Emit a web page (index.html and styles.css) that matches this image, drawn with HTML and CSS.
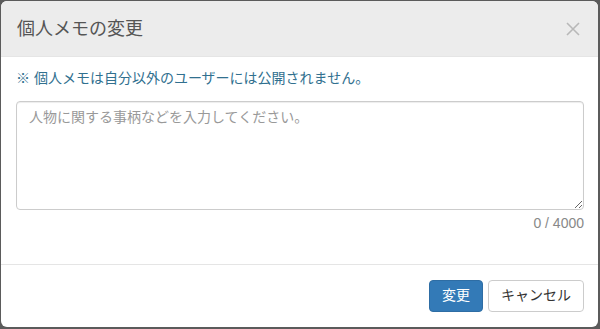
FILE: index.html
```html
<!DOCTYPE html>
<html lang="ja">
<head>
  <meta charset="UTF-8" />
  <title>個人メモの変更</title>
  <link rel="stylesheet" href="styles.css">
</head>
<body>
  <div class="modal">
    <div class="modal-header">
      <h4 class="modal-title">個人メモの変更</h4>
      <button class="close" type="button" aria-label="閉じる">
        <svg width="14" height="14" viewBox="0 0 14 14"><path d="M1 1L13 13M13 1L1 13" stroke="#b8b8b8" stroke-width="1.6" fill="none"/></svg>
      </button>
    </div>
    <div class="modal-body">
      <p class="note">※ 個人メモは自分以外のユーザーには公開されません。</p>
      <textarea class="memo" placeholder="人物に関する事柄などを入力してください。"></textarea>
      <div class="counter">0 / 4000</div>
    </div>
    <div class="modal-footer">
      <button class="btn btn-primary" type="button">変更</button>
      <button class="btn btn-default" type="button">キャンセル</button>
    </div>
  </div>
</body>
</html>
```

FILE: styles.css
```css
html, body {
  margin: 0;
  height: 100%;
}
body {
  background-color: #5b5b5b;
  padding: 1px 2px 2px 1px;
  box-sizing: border-box;
  font-family: "Liberation Sans", "Noto Sans CJK JP", sans-serif;
  font-size: 14px;
  line-height: 1.42857;
  color: #333;
}
.modal {
  background-color: #fff;
  border-radius: 6px;
  overflow: hidden;
  height: 100%;
  display: flex;
  flex-direction: column;
}
.modal-header {
  background-color: #ececec;
  border-bottom: 1px solid #e5e5e5;
  padding: 15px 15px 14px 16px;
  display: flex;
  align-items: center;
  justify-content: space-between;
}
.modal-title {
  margin: 0;
  font-size: 18px;
  font-weight: normal;
  color: #555;
  line-height: 26px;
}
.close {
  border: 0;
  background: none;
  padding: 0;
  margin-right: 3px;
  display: flex;
  cursor: pointer;
}
.modal-body {
  padding: 12px 14px 0 15px;
  flex: 1;
}
.note {
  margin: 0 0 12px;
  color: #31708f;
}
.memo {
  display: block;
  box-sizing: border-box;
  width: 100%;
  height: 109px;
  padding: 6px 12px;
  border: 1px solid #ccc;
  border-radius: 4px;
  box-shadow: inset 0 1px 1px rgba(0,0,0,0.075);
  font-family: inherit;
  font-size: 14px;
  line-height: 1.42857;
  color: #555;
  resize: vertical;
}
.memo::placeholder {
  color: #999;
}
.counter {
  text-align: right;
  color: #888;
  margin-top: 4px;
}
.modal-footer {
  border-top: 1px solid #e5e5e5;
  padding: 15px 14px 15px;
  display: flex;
  justify-content: flex-end;
  gap: 5px;
}
.btn {
  font-family: inherit;
  font-size: 14px;
  line-height: 1.42857;
  padding: 5px 12px;
  border: 1px solid transparent;
  border-radius: 4px;
  cursor: pointer;
}
.btn-primary {
  background-color: #337ab7;
  border-color: #2e6da4;
  color: #fff;
}
.btn-default {
  background-color: #fff;
  border-color: #ccc;
  color: #333;
}
```
